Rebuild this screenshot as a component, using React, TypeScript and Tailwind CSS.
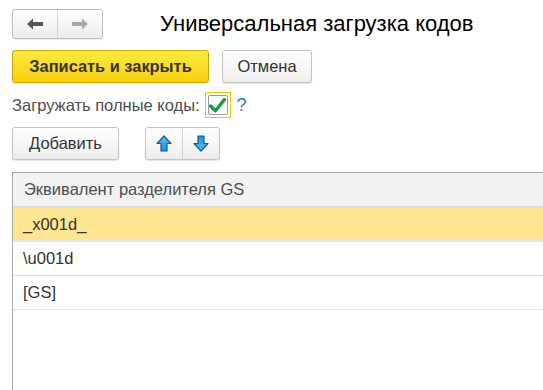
import React from "react";

const font = { fontFamily: '"Liberation Sans", Arial, sans-serif' };

function Arrow({ dir, color }: { dir: "left" | "right"; color: string }) {
  return (
    <svg width="16" height="12" viewBox="0 0 16 12">
      {dir === "left" ? (
        <path d="M0 6 L6 0.5 V4 H16 V8 H6 V11.5 Z" fill={color} />
      ) : (
        <path d="M16 6 L10 0.5 V4 H0 V8 H10 V11.5 Z" fill={color} />
      )}
    </svg>
  );
}

function BlueArrow({ up }: { up: boolean }) {
  return (
    <svg width="16" height="17" viewBox="0 0 16 17">
      <defs>
        <linearGradient id={up ? "gu" : "gd"} x1="0" y1="0" x2="0" y2="1">
          <stop offset="0" stopColor="#5cc4f5" />
          <stop offset="1" stopColor="#1d8fd8" />
        </linearGradient>
      </defs>
      <g transform={up ? "" : "rotate(180 8 8.5)"}>
        <path
          d="M8 1 L15 8.5 H11 V16 H5 V8.5 H1 Z"
          fill={`url(#${up ? "gu" : "gd"})`}
          stroke="#0f5e93"
          strokeWidth="1.2"
          strokeLinejoin="round"
        />
      </g>
    </svg>
  );
}

export default function App() {
  return (
    <div className="w-[543px] h-[390px] bg-white overflow-hidden text-[#333]" style={font}>
      <div className="flex items-center pl-[12px] pt-[9px] h-[39px]">
        <div className="flex h-[30px] w-[91px] rounded-[3px] border border-[#bdbdbd] bg-gradient-to-b from-white to-[#ececec] shadow-[0_1px_1px_rgba(0,0,0,0.08)]">
          <div className="flex-1 flex items-center justify-center border-r border-[#d4d4d4]">
            <Arrow dir="left" color="#555555" />
          </div>
          <div className="flex-1 flex items-center justify-center">
            <Arrow dir="right" color="#a8a8a8" />
          </div>
        </div>
        <div className="ml-[57px] text-[22px] text-black leading-none mt-[-1px]">Универсальная загрузка кодов</div>
      </div>

      <div className="flex items-center gap-[13px] pl-[12px] mt-[11px]">
        <button className="h-[33px] w-[197px] rounded-[3px] border border-[#c9a800] bg-gradient-to-b from-[#ffe83d] to-[#f5d000] text-[16.4px] font-bold text-[#333] shadow-[0_1px_1px_rgba(0,0,0,0.1)]">
          Записать и закрыть
        </button>
        <button className="h-[33px] w-[90px] rounded-[3px] border border-[#c2c2c2] bg-gradient-to-b from-white to-[#eeeeee] text-[16.5px] text-[#333] shadow-[0_1px_1px_rgba(0,0,0,0.1)]">
          Отмена
        </button>
      </div>

      <div className="flex items-center pl-[12px] mt-[9px] h-[26px]">
        <span className="text-[16.5px] text-[#4d4d4d]">Загружать полные коды:</span>
        <div className="ml-[5px] w-[26px] h-[26px] border-[1.5px] border-[#f2c200] flex items-center justify-center">
          <div className="w-[20px] h-[20px] border border-[#9a9a9a] rounded-[2px] bg-white flex items-center justify-center">
            <svg width="17" height="15" viewBox="0 0 16 14">
              <path d="M1.5 7.5 L6 12 L14.5 1.5" fill="none" stroke="#16a04a" strokeWidth="3.2" strokeLinecap="round" strokeLinejoin="round" />
            </svg>
          </div>
        </div>
        <span className="ml-[6px] text-[18px] text-[#1c7fd0]">?</span>
      </div>

      <div className="flex items-center pl-[12px] mt-[9px] h-[33px]">
        <button className="h-[33px] w-[107px] rounded-[3px] border border-[#c2c2c2] bg-gradient-to-b from-white to-[#eeeeee] text-[16.5px] text-[#333] shadow-[0_1px_1px_rgba(0,0,0,0.1)]">
          Добавить
        </button>
        <div className="ml-[26px] flex h-[33px] w-[75px] rounded-[3px] border border-[#c2c2c2] bg-gradient-to-b from-white to-[#eeeeee] shadow-[0_1px_1px_rgba(0,0,0,0.1)]">
          <div className="flex-1 flex items-center justify-center border-r border-[#d4d4d4]">
            <BlueArrow up />
          </div>
          <div className="flex-1 flex items-center justify-center">
            <BlueArrow up={false} />
          </div>
        </div>
      </div>

      <div className="ml-[12px] mt-[12px] h-[300px] border-l border-t border-[#a9a9a9] bg-white">
        <div className="h-[35px] bg-[#f2f2f2] border-b-2 border-[#dcdcdc] flex items-center pl-[11px] text-[16.5px] text-[#4d4d4d]">
          Эквивалент разделителя GS
        </div>
        <div className="h-[34px] bg-[#fee590] border-b-2 border-[#e6e6e6] flex items-center pl-[10px] text-[16.5px] text-[#333]">
          _x001d_
        </div>
        <div className="h-[34px] border-b border-[#e0e0e0] flex items-center pl-[10px] text-[16.5px] text-[#333]">
          \u001d
        </div>
        <div className="h-[34px] border-b border-[#e0e0e0] flex items-center pl-[10px] text-[16.5px] text-[#333]">
          [GS]
        </div>
      </div>
    </div>
  );
}
